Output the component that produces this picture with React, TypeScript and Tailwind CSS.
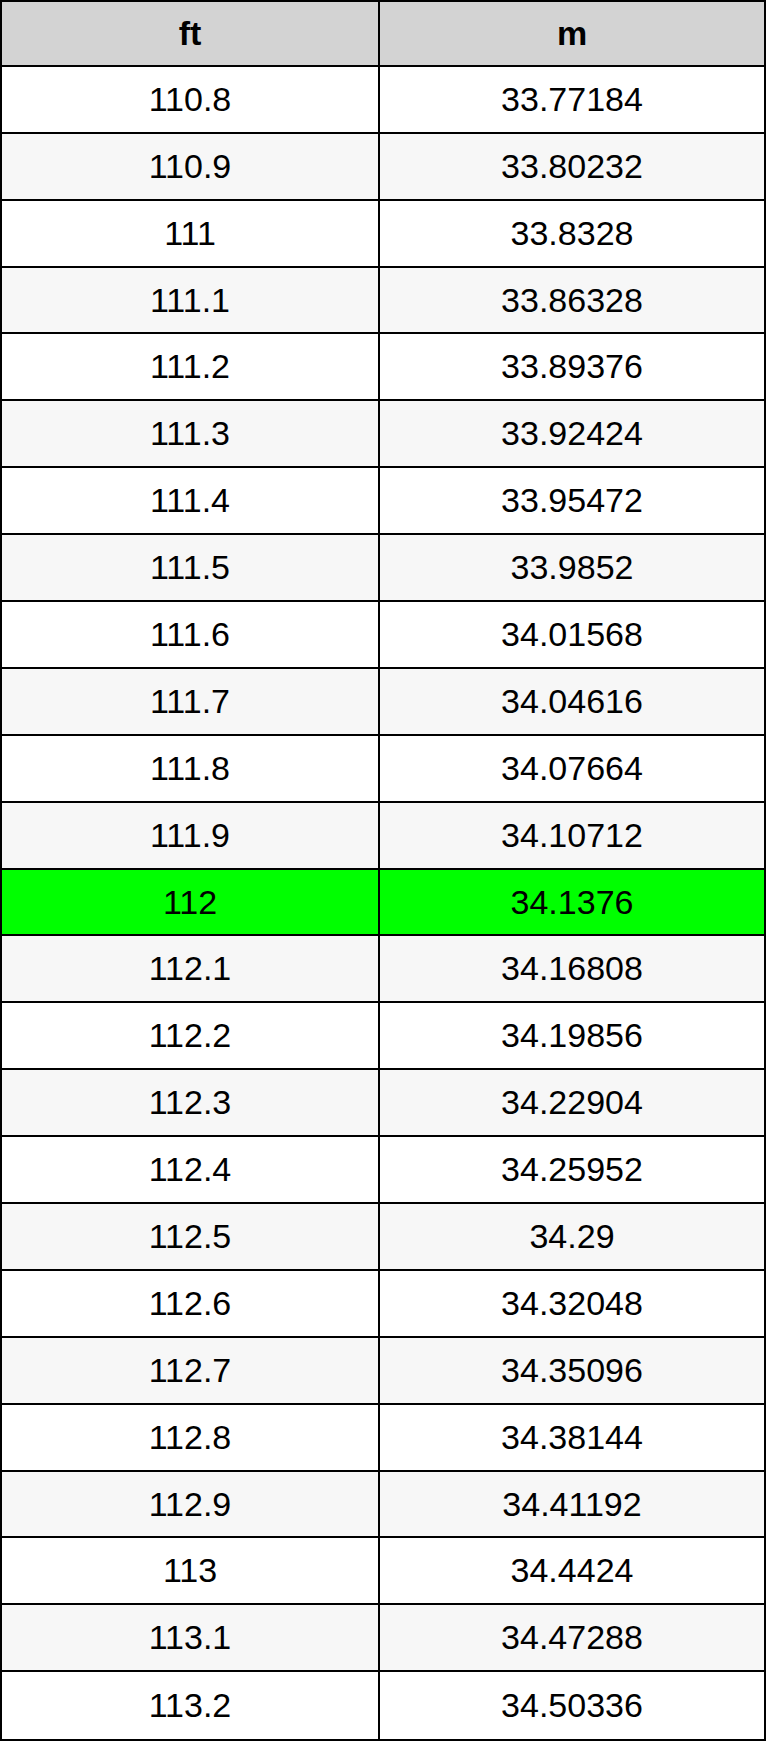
import React from "react";

const rows: [string, string][] = [
  ["110.8", "33.77184"],
  ["110.9", "33.80232"],
  ["111", "33.8328"],
  ["111.1", "33.86328"],
  ["111.2", "33.89376"],
  ["111.3", "33.92424"],
  ["111.4", "33.95472"],
  ["111.5", "33.9852"],
  ["111.6", "34.01568"],
  ["111.7", "34.04616"],
  ["111.8", "34.07664"],
  ["111.9", "34.10712"],
  ["112", "34.1376"],
  ["112.1", "34.16808"],
  ["112.2", "34.19856"],
  ["112.3", "34.22904"],
  ["112.4", "34.25952"],
  ["112.5", "34.29"],
  ["112.6", "34.32048"],
  ["112.7", "34.35096"],
  ["112.8", "34.38144"],
  ["112.9", "34.41192"],
  ["113", "34.4424"],
  ["113.1", "34.47288"],
  ["113.2", "34.50336"],
];

export default function App() {
  return (
    <div className="bg-white w-[768px] h-[1747px]" style={{ fontFamily: '"Liberation Sans", Arial, sans-serif' }}>
      <div className="w-[766px] border-2 border-black text-black text-[34px]">
        <div className="flex h-[64.9px] bg-[#d3d3d3] border-b-2 border-black font-bold">
          <div className="w-[378px] border-r-2 border-black flex items-center justify-center">ft</div>
          <div className="flex-1 flex items-center justify-center">m</div>
        </div>
        {rows.map(([a, b], i) => {
          const hl = a === "112";
          const bg = hl ? "bg-[#00ff00]" : i % 2 === 0 ? "bg-white" : "bg-[#f7f7f7]";
          const last = i === rows.length - 1;
          return (
            <div key={a} className={`flex h-[66.9px] ${bg} ${last ? "" : "border-b-2"} border-black`}>
              <div className="w-[378px] border-r-2 border-black flex items-center justify-center">{a}</div>
              <div className="flex-1 flex items-center justify-center">{b}</div>
            </div>
          );
        })}
      </div>
    </div>
  );
}
